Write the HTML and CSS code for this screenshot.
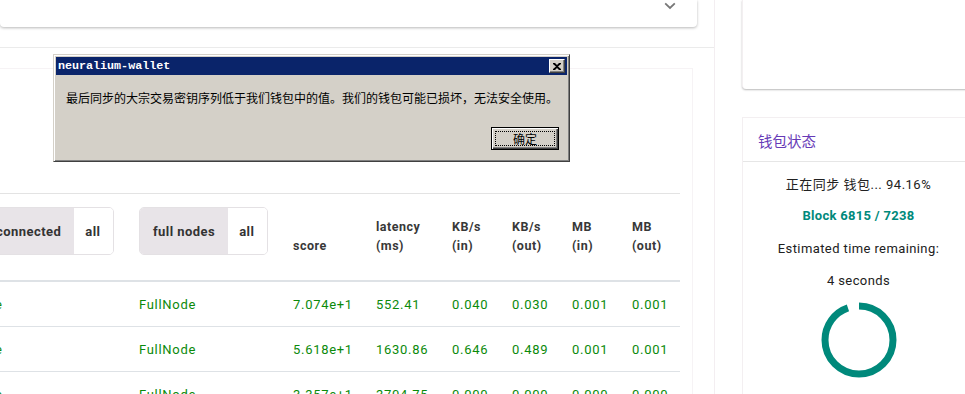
FILE: index.html
```html
<!DOCTYPE html>
<html lang="zh">
<head>
<meta charset="utf-8">
<title>neuralium-wallet</title>
<link rel="stylesheet" href="styles.css">
</head>
<body>
<div class="page">
  <div class="main">
    <div class="select-card">
      <svg class="chevron" width="12" height="8" viewBox="0 0 12 8"><path d="M1.2 1.4 L6 6 L10.8 1.4" fill="none" stroke="#777" stroke-width="1.8"/></svg>
    </div>
    <div class="rule"></div>
    <div class="table-card">
      <div class="table-spacer"></div>
      <table class="peers">
        <colgroup>
          <col class="c1"><col class="c2"><col class="c3"><col class="c4"><col class="c5"><col class="c5"><col class="c5"><col class="c5">
        </colgroup>
        <thead>
          <tr>
            <th class="th-toggle"><div class="toggle"><span class="t-on">connected</span><span class="t-off">all</span></div></th>
            <th class="th-toggle"><div class="toggle"><span class="t-on">full nodes</span><span class="t-off">all</span></div></th>
            <th>score</th>
            <th>latency<br>(ms)</th>
            <th>KB/s<br>(in)</th>
            <th>KB/s<br>(out)</th>
            <th>MB<br>(in)</th>
            <th>MB<br>(out)</th>
          </tr>
        </thead>
        <tbody>
          <tr><td class="first">True</td><td>FullNode</td><td>7.074e+1</td><td>552.41</td><td>0.040</td><td>0.030</td><td>0.001</td><td>0.001</td></tr>
          <tr><td class="first">True</td><td>FullNode</td><td>5.618e+1</td><td>1630.86</td><td>0.646</td><td>0.489</td><td>0.001</td><td>0.001</td></tr>
          <tr><td class="first">True</td><td>FullNode</td><td>3.357e+1</td><td>3704.75</td><td>0.000</td><td>0.000</td><td>0.000</td><td>0.000</td></tr>
        </tbody>
      </table>
    </div>
  </div>
  <div class="side">
    <div class="side-card side-top"></div>
    <div class="side-card status">
      <div class="status-title">钱包状态</div>
      <div class="status-body">
        <div class="s-line s-sync">正在同步 钱包... 94.16%</div>
        <div class="s-line s-block">Block 6815 / 7238</div>
        <div class="s-line s-est">Estimated time remaining:</div>
        <div class="s-line s-secs">4 seconds</div>
        <svg class="spinner" width="76" height="76" viewBox="0 0 76 76">
          <circle cx="38" cy="38" r="34" fill="none" stroke="#00897b" stroke-width="7" stroke-dasharray="202 12" transform="rotate(-90 38 38)"/>
        </svg>
      </div>
    </div>
  </div>
</div>

<div class="msgbox">
  <div class="mb-title">
    <span class="mb-title-text">neuralium-wallet</span>
    <span class="mb-close"><svg width="8" height="7" viewBox="0 0 8 7"><path d="M0 0h2l2 2 2-2h2v1L5 3.5 8 6v1H6L4 5 2 7H0V6l3-2.5L0 1z" fill="#000"/></svg></span>
  </div>
  <div class="mb-text">最后同步的大宗交易密钥序列低于我们钱包中的值。我们的钱包可能已损坏，无法安全使用。</div>
  <div class="mb-actions">
    <div class="mb-btn"><span class="mb-focus">确定</span></div>
  </div>
</div>
</body>
</html>
```

FILE: styles.css
```css
html, body {
  margin: 0;
  padding: 0;
  background: #fff;
}
body {
  overflow: hidden;
  width: 965px;
  height: 394px;
  font-family: Roboto, "Noto Sans CJK SC", sans-serif;
  color: #212121;
  position: relative;
}
.page {
  display: flex;
  width: 1000px;
  height: 394px;
}
.main {
  width: 714px;
  flex-shrink: 0;
  border-right: 1px solid #f3eef1;
  height: 394px;
}
.select-card {
  width: 697px;
  height: 27px;
  box-sizing: border-box;
  background: #fff;
  border-radius: 0 0 4px 4px;
  box-shadow: 0 1px 3px rgba(0,0,0,0.28);
  display: flex;
  justify-content: flex-end;
  align-items: flex-start;
  padding: 2px 21px 0 0;
}
.rule {
  margin-top: 20px;
  border-top: 1px solid #ebebeb;
}
.table-card {
  margin-top: 20px;
  width: 693px;
  box-sizing: border-box;
  height: 330px;
  border: 1px solid #f6f3f5;
  border-left: none;
  overflow: hidden;
}
.table-spacer {
  height: 124px;
}
.peers {
  margin-left: -30px;
  border-collapse: collapse;
  table-layout: fixed;
  width: 710px;
  border-top: 1px solid #e3e3e3;
}
.c1 { width: 157px; }
.c2 { width: 154px; }
.c3 { width: 83px; }
.c4 { width: 76px; }
.c5 { width: 60px; }
.peers th {
  text-align: left;
  vertical-align: bottom;
  font-weight: 700;
  font-size: 12.5px;
  letter-spacing: 0.5px;
  line-height: 19px;
  color: #383838;
  padding: 13px 0 25px 12px;
  border-bottom: 2px solid #dee2e6;
  white-space: nowrap;
}
.peers td {
  height: 44px;
  padding: 0 0 0 12px;
  font-size: 13px;
  letter-spacing: 0.7px;
  color: #0b8a0b;
  border-bottom: 1px solid #dee2e6;
  white-space: nowrap;
  vertical-align: middle;
}
.peers td.first {
  padding-left: 4px;
}
.toggle {
  display: inline-flex;
  height: 48px;
  border: 1px solid #e4e1e4;
  border-radius: 5px;
  overflow: hidden;
  box-sizing: border-box;
}
.toggle span {
  display: flex;
  align-items: center;
  font-size: 13px;
  font-weight: 700;
  letter-spacing: 0.45px;
  color: #333;
}
.t-on {
  background: #e8e4e8;
  padding: 0 13px 0 13px;
}
.t-off {
  background: #fff;
  padding: 0 13px 0 11px;
}

.side {
  margin-left: 27px;
  width: 233px;
  flex-shrink: 0;
}
.side-card {
  background: #fff;
  box-sizing: border-box;
}
.side-top {
  height: 89px;
  border-left: 1px solid #f3eff1;
  border-radius: 0 0 0 4px;
  box-shadow: 0 1px 2px rgba(0,0,0,0.28);
}
.status {
  margin-top: 28px;
  border: 1px solid #f3eff1;
  height: 300px;
}
.status-title {
  height: 43px;
  line-height: 46px;
  padding-left: 15px;
  font-family: "Noto Sans CJK SC", sans-serif;
  font-size: 14.5px;
  color: #673ab7;
  border-bottom: 1px solid #e6e6e6;
}
.status-body {
  display: flex;
  flex-direction: column;
  align-items: center;
  padding-top: 13px;
}
.s-line {
  font-size: 13px;
  line-height: 20px;
  letter-spacing: 0.4px;
  color: #212121;
}
.s-sync {
  font-family: Roboto, "Noto Sans CJK SC", sans-serif;
  letter-spacing: 0.5px;
}
.s-block {
  margin-top: 11px;
  font-weight: 700;
  color: #00897b;
  letter-spacing: 0.3px;
}
.s-est { margin-top: 13px; }
.s-secs { margin-top: 12px; }
.spinner {
  margin-top: 11px;
  display: block;
}

/* Windows classic message box */
.msgbox {
  position: absolute;
  left: 53px;
  top: 54px;
  width: 517px;
  height: 108px;
  box-sizing: border-box;
  background: #d4d0c8;
  border: 1px solid;
  border-color: #d4d0c8 #404040 #404040 #d4d0c8;
  box-shadow: inset 1px 1px #fff, inset -1px -1px #808080;
  padding: 2px;
}
.mb-title {
  height: 18px;
  background: #0a246a;
  display: flex;
  align-items: center;
  justify-content: space-between;
  padding: 0 2px 0 2px;
}
.mb-title-text {
  font-family: "Liberation Mono", monospace;
  font-weight: 700;
  font-size: 11.7px;
  color: #fff;
  line-height: 18px;
}
.mb-close {
  width: 16px;
  height: 14px;
  box-sizing: border-box;
  background: #d4d0c8;
  border: 1px solid;
  border-color: #fff #404040 #404040 #fff;
  box-shadow: inset -1px -1px #808080;
  display: flex;
  align-items: center;
  justify-content: center;
}
.mb-text {
  padding: 15px 0 0 10px;
  font-family: "Noto Sans CJK SC", sans-serif;
  font-size: 12px;
  line-height: 16px;
  color: #000;
  white-space: nowrap;
}
.mb-actions {
  display: flex;
  justify-content: flex-end;
  margin-top: 21px;
  padding-right: 8px;
}
.mb-btn {
  width: 68px;
  height: 23px;
  box-sizing: border-box;
  border: 1px solid #000;
  background: #d4d0c8;
  box-shadow: inset 1px 1px #fff, inset -1px -1px #404040, inset -2px -2px #808080;
  padding: 3px;
  display: flex;
}
.mb-focus {
  flex: 1;
  border: 1px dotted #000;
  display: flex;
  align-items: center;
  justify-content: center;
  font-family: "Noto Sans CJK SC", sans-serif;
  font-size: 12px;
  color: #000;
}
```
